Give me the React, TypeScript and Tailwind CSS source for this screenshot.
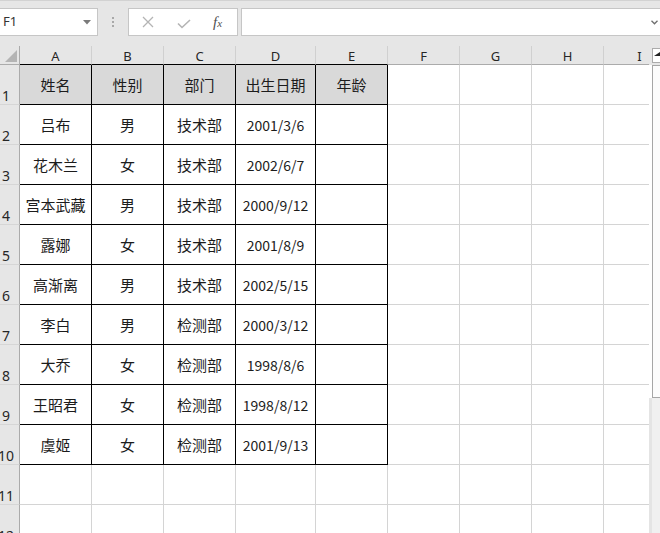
import React from "react";

type Col = { label: string; width: string };

const columns: Col[] = [
  { label: "A", width: "w-[72px]" },
  { label: "B", width: "w-[72px]" },
  { label: "C", width: "w-[72px]" },
  { label: "D", width: "w-[80px]" },
  { label: "E", width: "w-[72px]" },
  { label: "F", width: "w-[72px]" },
  { label: "G", width: "w-[72px]" },
  { label: "H", width: "w-[72px]" },
  { label: "I", width: "w-[72px]" },
];

const header = ["姓名", "性别", "部门", "出生日期", "年龄"];

const people: string[][] = [
  ["吕布", "男", "技术部", "2001/3/6", ""],
  ["花木兰", "女", "技术部", "2002/6/7", ""],
  ["宫本武藏", "男", "技术部", "2000/9/12", ""],
  ["露娜", "女", "技术部", "2001/8/9", ""],
  ["高渐离", "男", "技术部", "2002/5/15", ""],
  ["李白", "男", "检测部", "2000/3/12", ""],
  ["大乔", "女", "检测部", "1998/8/6", ""],
  ["王昭君", "女", "检测部", "1998/8/12", ""],
  ["虞姬", "女", "检测部", "2001/9/13", ""],
];

const rows: string[][] = [header, ...people, [], []];

const cjk = "font-['Microsoft_YaHei','Noto_Sans_CJK_SC',sans-serif]";

function FormulaBar() {
  return (
    <div className="flex h-[46px] shrink-0 items-start border-t border-[#d2d2d2] pt-[7px]">
      {/* name box */}
      <div className="flex h-[28px] w-[98px] items-center justify-between border border-l-0 border-[#c6c6c6] bg-white pl-[3px] pr-[6px]">
        <span className="font-['Noto_Sans',sans-serif] text-[13px] text-[#333]">F1</span>
        <svg width="8" height="5" viewBox="0 0 8 5">
          <path d="M0 0h8L4 4.5z" fill="#7a7a7a" />
        </svg>
      </div>
      <div className="flex h-[28px] w-[30px] flex-col items-center justify-center gap-[2px] pr-[1px]">
        <span className="h-[2px] w-[2px] bg-[#a8a8a8]" />
        <span className="h-[2px] w-[2px] bg-[#a8a8a8]" />
        <span className="h-[2px] w-[2px] bg-[#a8a8a8]" />
      </div>
      {/* cancel / enter / fx */}
      <div className="flex h-[28px] w-[110px] items-center border border-[#c6c6c6] bg-white">
        <svg className="ml-[13px]" width="12" height="12" viewBox="0 0 12 12">
          <path d="M1 1l10 10M11 1L1 11" stroke="#b4b4b4" strokeWidth="1.3" />
        </svg>
        <svg className="ml-[23px] mt-[3px]" width="14" height="10" viewBox="0 0 14 10">
          <path d="M1 4.5l4 4L13 1" stroke="#b4b4b4" strokeWidth="1.6" fill="none" />
        </svg>
        <span className="ml-[22px] font-['Liberation_Serif',serif] text-[15px] italic leading-none text-[#505050]">
          f<span className="text-[11px]">x</span>
        </span>
      </div>
      {/* formula input */}
      <div className="ml-[3px] flex h-[28px] flex-1 items-center justify-end border border-r-0 border-[#c6c6c6] bg-white pr-[2px]">
        <svg width="7" height="5" viewBox="0 0 7 5">
          <path d="M0.5 0.8L3.5 3.8L6.5 0.8" stroke="#6e6e6e" strokeWidth="1.3" fill="none" />
        </svg>
      </div>
    </div>
  );
}

function ColumnHeaders() {
  return (
    <div className="flex h-[19px] shrink-0">
      <div className="flex w-[20px] shrink-0 items-end justify-end border-r border-b border-[#ababab] pb-[2px] pr-[2px]">
        <svg width="12" height="12" viewBox="0 0 12 12">
          <path d="M12 0V12H0z" fill="#b4b4b4" />
        </svg>
      </div>
      {columns.map((c, i) => (
        <div
          key={c.label}
          className={`${c.width} flex shrink-0 items-center justify-center border-r border-b border-r-[#d0d0d0] pt-[2px] font-['Noto_Sans',sans-serif] text-[13px] leading-none text-[#262626] ${
            i < 5 ? "border-b-black" : "border-b-[#ababab]"
          }`}
        >
          {c.label}
        </div>
      ))}
    </div>
  );
}

function Row({ index, cells }: { index: number; cells: string[] }) {
  const inTable = index < 10;
  return (
    <div className="flex h-[40px] shrink-0">
      <div className="flex w-[20px] shrink-0 items-end border-r border-b border-r-[#ababab] border-b-[#d6d6d6] pb-[1px]">
        <div className="flex w-[12px] justify-center overflow-visible font-['Noto_Sans',sans-serif] text-[14px] leading-none whitespace-nowrap text-[#262626]">
          {index + 1}
        </div>
      </div>
      {columns.map((c, ci) => {
        const table = inTable && ci < 5;
        const fill = index === 0 && ci < 5 ? "bg-[#d9d9d9]" : "bg-white";
        const right = table ? "border-r-black" : "border-r-[#d4d4d4]";
        const bottom = table ? "border-b-black" : "border-b-[#d4d4d4]";
        const value = cells[ci] ?? "";
        const size = /\d/.test(value) ? "text-[14px]" : "text-[15px]";
        return (
          <div
            key={c.label}
            className={`${c.width} ${fill} ${right} ${bottom} ${size} flex shrink-0 items-center justify-center border-r border-b ${cjk} leading-none whitespace-nowrap text-[#1c1c1c]`}
          >
            {value}
          </div>
        );
      })}
    </div>
  );
}

function Scrollbar() {
  return (
    <div className="flex w-[11px] shrink-0 flex-col">
      <div className="flex h-[19px] shrink-0 pl-[3px] pt-[2px]">
        <div className="flex h-[15px] w-full items-start border border-r-0 border-[#ababab] bg-white pl-[1px] pt-[3px]">
          <svg width="6" height="4" viewBox="0 0 6 4">
            <path d="M0 4L6 4L6 0z" fill="#222" />
          </svg>
        </div>
      </div>
      <div className="flex h-[333px] shrink-0 bg-white pl-[3px]">
        <div className="w-full border border-r-0 border-[#a6a6a6] bg-[#fcfcfc]" />
      </div>
      <div className="flex flex-1">
        <div className="w-[3px] bg-[#e4e4e4]" />
        <div className="flex-1 bg-[#f0f0f0]" />
      </div>
    </div>
  );
}

export default function App() {
  return (
    <div className="flex h-[533px] w-[660px] flex-col overflow-hidden bg-[#e6e6e6]">
      <FormulaBar />
      <div className="flex min-h-0 flex-1 overflow-hidden">
        <div className="flex w-[649px] shrink-0 flex-col overflow-hidden">
          <ColumnHeaders />
          <div className="flex shrink-0 flex-col border-r border-[#9b9b9b]">
            {rows.map((cells, i) => (
              <Row key={i} index={i} cells={cells} />
            ))}
          </div>
        </div>
        <Scrollbar />
      </div>
    </div>
  );
}
